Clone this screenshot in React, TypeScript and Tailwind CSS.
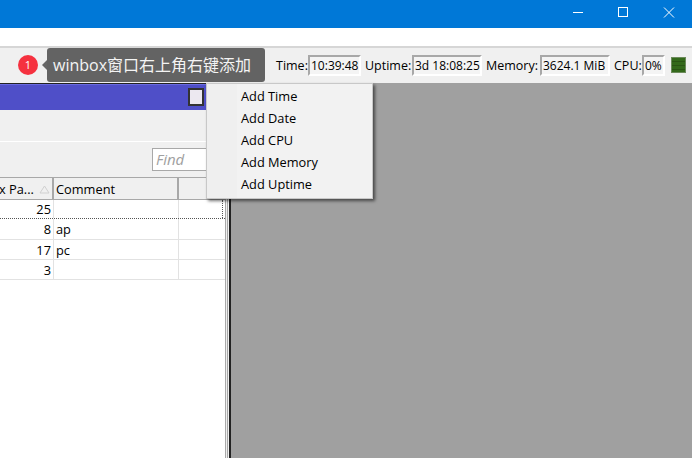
const font = "font-['Open_Sans','Noto_Sans_CJK_SC',sans-serif]";

function StatusField({ label, labelWidth, value, width }: { label: string; labelWidth: string; value: string; width: string }) {
  return (
    <div className="flex items-center">
      <span className={`${labelWidth} shrink-0 whitespace-nowrap text-[12.5px] font-medium text-black pt-[2px]`}>{label}</span>
      <span
        className={`${width} h-[21px] flex items-center pl-[1px] pt-[2px] text-[12px] font-medium text-black bg-[#f4f4f4] border-t-2 border-l-2 border-t-[#a8a8a8] border-l-[#a8a8a8] border-r-2 border-b-2 border-r-white border-b-white whitespace-nowrap overflow-hidden`}
      >
        {value}
      </span>
    </div>
  );
}

const rows = [
  { num: "25", comment: "", h: "h-[19px] border-b border-dotted border-b-[#555]" },
  { num: "8", comment: "ap", h: "h-[21px] border-b border-b-[#e2e2e2]" },
  { num: "17", comment: "pc", h: "h-[20px] border-b border-b-[#e2e2e2]" },
  { num: "3", comment: "", h: "h-[20px] border-b border-b-[#e2e2e2]" },
];

const menuItems = ["Add Time", "Add Date", "Add CPU", "Add Memory", "Add Uptime"];

export default function App() {
  return (
    <div className={`${font} relative w-[692px] h-[458px] overflow-hidden bg-white flex flex-col`}>
      {/* window title bar */}
      <div className="h-[28px] bg-[#0078d7] flex justify-end items-center shrink-0">
        <svg width="120" height="28" viewBox="0 0 120 28" fill="none" stroke="white" strokeWidth="1">
          <path d="M1 12.5H11" />
          <rect x="46.5" y="7.5" width="9" height="9" />
          <path d="M92 7.5L102 17.5M102 7.5L92 17.5" />
        </svg>
      </div>
      <div className="h-[18px] bg-white shrink-0" />

      {/* toolbar */}
      <div className="h-[37px] bg-[#f0f0f0] border-t-2 border-t-[#d6d6d6] border-b border-b-[#f0f0f0] flex items-center shrink-0 pl-[18px]">
        <div className="w-[20px] h-[20px] rounded-full bg-[#f5313f] text-white text-[11px] flex items-center justify-center">
          1
        </div>
        <div className="w-0 h-0 ml-[4px] border-y-[5px] border-y-transparent border-r-[5px] border-r-[#666]" />
        <div className="h-[34px] w-[218px] rounded-[3px] bg-[#636363] text-[#f4f4f4] text-[16px] flex items-center pl-[6px] whitespace-nowrap">
          winbox窗口右上角右键添加
        </div>
        <div className="flex items-center ml-[11px] gap-[4px]">
          <StatusField label="Time:" labelWidth="w-[32px]" value="10:39:48" width="w-[53px]" />
          <StatusField label="Uptime:" labelWidth="w-[47px]" value="3d 18:08:25" width="w-[70px]" />
          <StatusField label="Memory:" labelWidth="w-[54px]" value="3624.1 MiB" width="w-[70px]" />
          <StatusField label="CPU:" labelWidth="w-[28px]" value="0%" width="w-[23px]" />
        </div>
        <div className="ml-[6px] w-[15px] h-[16px] bg-[repeating-linear-gradient(to_bottom,#33691a_0px,#33691a_3px,#2a5514_3px,#2a5514_4px)] border border-[#6b8a5a]" />
      </div>

      {/* workspace */}
      <div className="flex-1 flex min-h-0">
        <div className="w-[225px] shrink-0 bg-white flex flex-col">
          <div className="h-[27px] bg-[#4f4fc8] border-t border-t-[#222] shadow-[inset_0_1px_0_#6a6ae0] flex justify-end items-center pr-[21px] shrink-0">
            <div className="w-[16px] h-[18px] bg-[#ece8f0] border-2 border-[#333]" />
          </div>
          <div className="h-[32px] bg-[#f0f0f0] border-b border-b-white shrink-0" />
          <div className="h-[35px] bg-[#f0f0f0] flex items-center justify-end shrink-0">
            <div className="w-[73px] h-[23px] bg-white border border-[#a8a8a8] pl-[3px] text-[15px] italic text-[#a0a0a0] flex items-center">
              Find
            </div>
          </div>
          <div className="h-[23px] bg-[#f0f0f0] border-y border-y-[#a8a8a8] flex text-[12.8px] font-medium text-black shrink-0">
            <div className="w-[54px] pt-[2px] border-r-2 border-r-[#a8a8a8] flex items-center justify-between whitespace-nowrap overflow-hidden">
              <span className="-ml-[1px]">x Pa...</span>
              <svg width="11" height="9" viewBox="0 0 11 9" className="mr-[2px]" fill="none" stroke="#d0d0d0">
                <path d="M5.5 1L10 8H1Z" />
              </svg>
            </div>
            <div className="w-[125px] pt-[2px] border-r-2 border-r-[#a8a8a8] flex items-center pl-[2px]">Comment</div>
            <div className="flex-1" />
          </div>
          {rows.map((r, i) => (
            <div key={r.num} className={`${r.h} flex text-[12.8px] font-medium text-black shrink-0`}>
              <div className="w-[54px] pt-[2px] border-r border-r-[#e2e2e2] flex items-center justify-end pr-[2px]">{r.num}</div>
              <div className="w-[125px] pt-[2px] border-r border-r-[#e2e2e2] flex items-center pl-[2px]">{r.comment}</div>
              <div className={`flex-1 ${i === 0 ? "mr-[2px] border-r border-dotted border-r-[#555]" : ""}`} />
            </div>
          ))}
        </div>
        {/* splitter */}
        <div className="w-[6px] shrink-0 flex">
          <div className="w-[1px] bg-[#a8a8a8]" />
          <div className="w-[1px] bg-[#f0f0f0]" />
          <div className="w-[1px] bg-[#a8a8a8]" />
          <div className="w-[1px] bg-[#f0f0f0]" />
          <div className="w-[2px] bg-[#222]" />
        </div>
        <div className="flex-1 bg-[#a0a0a0]" />
      </div>

      {/* context menu */}
      <div className="absolute left-[206px] top-[83px] w-[167px] h-[116px] bg-[linear-gradient(to_right,#efefef_30px,#f2f2f2_30px)] border border-[#c8c8c8] shadow-[2px_2px_3px_rgba(0,0,0,0.55)] py-[2px] pl-[34px] flex flex-col">
        {menuItems.map((m) => (
          <div key={m} className="h-[22px] flex items-center text-[12.8px] text-black">
            {m}
          </div>
        ))}
      </div>
    </div>
  );
}
